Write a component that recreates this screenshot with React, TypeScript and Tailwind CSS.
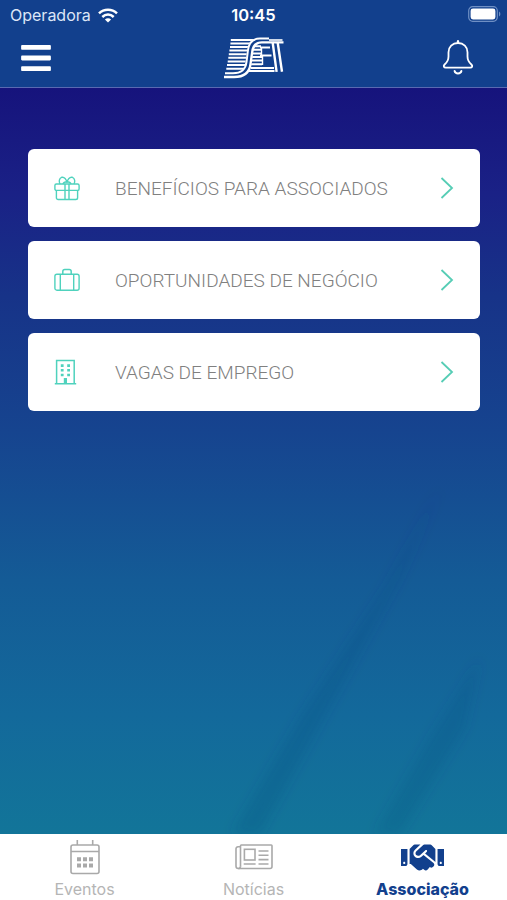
import React from 'react';
import { FaBars, FaHandshake } from 'react-icons/fa';

type IconProps = { className?: string };

const WifiIcon: React.FC<IconProps> = ({ className }) => (
  <svg viewBox="0 0 20 15" className={className} fill="none" stroke="currentColor" strokeWidth="2.5">
    <path d="M1 5.4C6 .5 14 .5 19 5.4" />
    <path d="M4.3 9C7.6 5.8 12.4 5.8 15.7 9" />
    <path d="M10 14.6 6.9 11.5c1.8-1.7 4.4-1.7 6.2 0z" fill="currentColor" stroke="none" />
  </svg>
);

const BatteryIcon: React.FC<IconProps> = ({ className }) => (
  <svg viewBox="0 0 33 16" className={className} fill="none">
    <rect x="0.7" y="0.7" width="28.6" height="14.6" rx="4" stroke="#6f8fc4" strokeWidth="1.2" />
    <rect x="2.6" y="2.6" width="24.8" height="10.8" rx="2.4" fill="#fff" />
    <path d="M31 5.5c1.8.7 1.8 4.3 0 5z" fill="#6f8fc4" />
  </svg>
);

const SetLogo: React.FC<IconProps> = ({ className }) => (
  <svg viewBox="0 0 61 42" className={className} fill="none" stroke="#fff">
    {/* speed lines */}
    <g strokeWidth="2">
      <path d="M6.8 3H30M6.4 6.4H26M6 10H25M5.4 13.6H24.5M4.8 17.2H24M4.3 20.8H24M3.7 24.4H24M3 28H23M2.3 31.8H21" />
      <path d="M29 9.2H37M29 12.8H38M28 16.4H38M28 20H38M27.5 23.6H38M27 27.2H38" />
    </g>
    {/* S */}
    <path d="M0 38H9C19 38 23.6 34 24.4 26L26 14C27 6.5 30.5 3.5 37 3.5H42" stroke="#12408d" strokeWidth="6" />
    <path d="M1 36.3H9C17.5 36.3 21.6 32.5 22.5 25L24 13C25 5.4 29.5 1.6 36 1.6H45" strokeWidth="2" />
    <path d="M0 40H10C20.5 40 25.6 35 26.5 27L28.2 15C29 8.5 32 5.3 38 5.3H59.5" strokeWidth="2.3" />
    {/* E */}
    <path d="M36 10.6H46M36 18.6H47.5M27 31H50M25 34H50.5" strokeWidth="2" />
    <path d="M37.5 10V19.5M38.5 18V28" strokeWidth="1.4" />
    {/* T */}
    <path d="M45 3H58.5" strokeWidth="1.6" />
    <path d="M48.6 5 52.6 34.8M53.6 5 58 34.8" strokeWidth="2.4" />
  </svg>
);

const BellIcon: React.FC<IconProps> = ({ className }) => (
  <svg viewBox="0 0 32 35" className={className} fill="none" stroke="currentColor" strokeWidth="1.8" strokeLinecap="round" strokeLinejoin="round">
    <path d="M16 1.2V3" strokeWidth="2.2" />
    <path d="M16 3C10.4 3 6.5 7 6.5 12.2V16.5C6.5 20.4 5.4 22 2.6 24.5 1 26 1.8 27.7 3.8 27.7H28.2C30.2 27.7 31 26 29.4 24.5 26.6 22 25.5 20.4 25.5 16.5V12.2C25.5 7 21.6 3 16 3Z" />
    <path d="M12.6 31C13.4 34.2 18.6 34.2 19.4 31" strokeWidth="2" />
  </svg>
);

const GiftIcon: React.FC<IconProps> = ({ className }) => (
  <svg viewBox="0 0 26 26" className={className} fill="none" stroke="currentColor" strokeWidth="1.4" strokeLinejoin="round">
    <rect x="0.9" y="9" width="24.2" height="6.4" rx="1.5" />
    <path d="M2.4 15.4V22.7a1.8 1.8 0 0 0 1.8 1.8H21.8a1.8 1.8 0 0 0 1.8-1.8V15.4M11 9V24.5M15 9V24.5" />
    <path d="M6 9C4.6 6.5 5.2 3.2 7.6 2.3 10.4 1.6 12.4 4.4 13 7.4 13.6 4.4 15.6 1.6 18.4 2.3 20.8 3.2 21.4 6.5 20 9M9 9C9.5 7.4 11 6.7 13 6.7 15 6.7 16.5 7.4 17 9" />
  </svg>
);

const SuitcaseIcon: React.FC<IconProps> = ({ className }) => (
  <svg viewBox="0 0 26 26" className={className} fill="none" stroke="currentColor" strokeWidth="1.4">
    <rect x="0.9" y="7.2" width="24.2" height="16" rx="2" />
    <path d="M6.3 7.2V23.2M19.7 7.2V23.2" />
    <path d="M8.8 7.2V4.4a2 2 0 0 1 2-2h4.4a2 2 0 0 1 2 2V7.2" strokeWidth="1.5" />
  </svg>
);

const BuildingIcon: React.FC<IconProps> = ({ className }) => (
  <svg viewBox="0 0 26 26" className={className} fill="none" stroke="currentColor" strokeWidth="1.5">
    <path d="M2.6 24.5V1.5H20.2V24.5M0.8 24.7H22.2" />
    <path d="M11.4 19V24.5" strokeWidth="3.2" />
    <path d="M6.8 6.6h2.8M6.8 11.3h2.8M6.8 16h2.8M13.2 6.6h2.8M13.2 11.3h2.8M13.2 16h2.8" strokeWidth="2.6" />
  </svg>
);

const CalendarIcon: React.FC<IconProps> = ({ className }) => (
  <svg viewBox="0 0 30 35" className={className} fill="none" stroke="currentColor" strokeWidth="1.6">
    <rect x="1" y="5" width="28" height="28.5" rx="2" />
    <path d="M1 11.5H29M7.3 0V5M22.7 0V5" />
    <path d="M7 19.3h4M13 19.3h4M19 19.3h4M7 25.6h4M13 25.6h4M19 25.6h4" strokeWidth="4" />
  </svg>
);

const NewsIcon: React.FC<IconProps> = ({ className }) => (
  <svg viewBox="0 0 38 26" className={className} fill="none" stroke="currentColor" strokeWidth="1.6">
    <path d="M5.5 22.5V1.8a.8.8 0 0 1 .8-.8H36.2a.8.8 0 0 1 .8.8V22.5a2 2 0 0 1-2 2H3.2a2.2 2.2 0 0 1-2.2-2.2V4.8a2 2 0 0 1 2-2H5.5" />
    <path d="M5.5 22.3a2.1 2.1 0 0 1-2.2 2.2" />
    <rect x="9.4" y="5.3" width="10.6" height="10.7" />
    <path d="M23.5 7H33.5M23.5 11.3H33.5M23.5 15.6H33.5M8.7 20H20.6M23.5 20H33.5" />
  </svg>
);

const items = [
  { label: 'BENEFÍCIOS PARA ASSOCIADOS', icon: GiftIcon },
  { label: 'OPORTUNIDADES DE NEGÓCIO', icon: SuitcaseIcon },
  { label: 'VAGAS DE EMPREGO', icon: BuildingIcon },
];

const App: React.FC = () => {
  return (
    <div className="flex h-[900px] w-[507px] flex-col overflow-hidden bg-white font-['Inter',sans-serif]">
      {/* Header */}
      <header className="h-[88px] shrink-0 border-b border-[#5969b1] bg-[#12408d] text-white">
        <div className="grid h-[30px] grid-cols-3 items-center pr-[6px] pl-[10px]">
          <div className="flex items-center gap-[7px]">
            <span className="text-[16px] leading-5 text-[#dce6f7]">Operadora</span>
            <WifiIcon className="h-[15px] w-5" />
          </div>
          <span className="-ml-1 text-center text-[16.5px] leading-5 font-semibold">10:45</span>
          <BatteryIcon className="-mt-[2px] h-4 w-[33px] justify-self-end" />
        </div>
        <div className="grid h-[55px] grid-cols-3 items-center pr-[33px] pl-[21px]">
          <button className="flex h-[54px] w-[30px] items-center">
            <FaBars className="h-[34px] w-[30px]" />
          </button>
          <SetLogo className="ml-[52px] h-[42px] w-[61px]" />
          <button className="justify-self-end">
            <BellIcon className="h-[35px] w-8" />
          </button>
        </div>
      </header>

      {/* Content */}
      <main className="relative flex-1 overflow-hidden bg-[linear-gradient(180deg,#16137c_0%,#1a2186_14%,#173388_28%,#16448f_46%,#145b96_66%,#13699b_84%,#127599_100%)]">
        <svg viewBox="0 0 507 746" className="absolute inset-0 h-full w-full">
          <defs>
            <filter id="soft">
              <feGaussianBlur stdDeviation="6" />
            </filter>
          </defs>
          <g filter="url(#soft)" fill="#0b477c">
            <path d="M232 746 300 630 385 500 440 400 400 490 260 746Z" opacity="0.2" />
            <path d="M375 746 430 650 480 570 465 640 400 746Z" opacity="0.18" />
          </g>
        </svg>
        <div className="relative flex flex-col gap-[14px] pt-[61px] pr-[27px] pl-7">
          {items.map(({ label, icon: Icon }) => (
            <button key={label} className="flex h-[78px] items-center rounded-md bg-white px-[26px] text-left">
              <Icon className="h-[26px] w-[26px] shrink-0 text-[#4fd2bd]" />
              <span className="mt-[2px] ml-[35px] flex-1 font-['Roboto',sans-serif] text-[19px] font-light whitespace-nowrap text-[#808080]">
                {label}
              </span>
              <svg viewBox="0 0 14 24" className="h-6 w-[14px] text-[#56cdb5]" fill="none" stroke="currentColor" strokeWidth="1.8">
                <path d="M1.5 2 12 12 1.5 22" />
              </svg>
            </button>
          ))}
        </div>
      </main>

      {/* Bottom tabs */}
      <nav className="grid h-[66px] shrink-0 grid-cols-3 bg-white text-[16px] text-[#b5b5b5]">
        <button className="flex h-[66px] flex-col items-center pt-[6px]">
          <CalendarIcon className="h-[35px] w-[30px] shrink-0 text-[#a9a9a9]" />
          <span className="mt-1 leading-5">Eventos</span>
        </button>
        <button className="flex h-[66px] flex-col items-center pt-[10px]">
          <NewsIcon className="h-[26px] w-[38px] shrink-0 text-[#a9a9a9]" />
          <span className="mt-[9px] leading-5">Notícias</span>
        </button>
        <button className="flex h-[66px] flex-col items-center pt-[6px] text-[#12408d]">
          <FaHandshake className="h-[35px] w-[43px] shrink-0" />
          <span className="mt-1 leading-5 font-extrabold">Associação</span>
        </button>
      </nav>
    </div>
  );
};

export default App;
